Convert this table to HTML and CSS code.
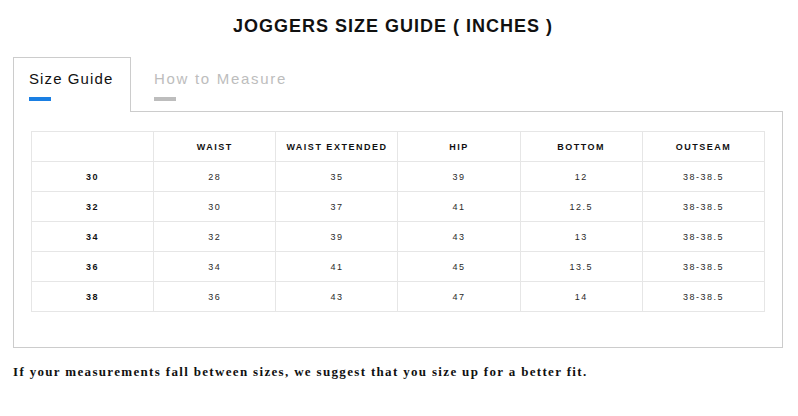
FILE: index.html
```html
<!DOCTYPE html>
<html>
<head>
<meta charset="utf-8">
<link rel="stylesheet" href="styles.css">
</head>
<body>
<div class="guide">
  <h1 class="title">JOGGERS SIZE GUIDE ( INCHES )</h1>
  <div class="tabs">
    <div class="tab tab-active">
      <span class="tab-label">Size Guide</span>
      <span class="tab-bar"></span>
    </div>
    <div class="tab tab-idle">
      <span class="tab-label">How to Measure</span>
      <span class="tab-bar"></span>
    </div>
  </div>
  <div class="panel">
    <table class="sizes">
      <thead>
        <tr><th></th><th>WAIST</th><th>WAIST EXTENDED</th><th>HIP</th><th>BOTTOM</th><th>OUTSEAM</th></tr>
      </thead>
      <tbody>
        <tr><td class="size">30</td><td>28</td><td>35</td><td>39</td><td>12</td><td>38-38.5</td></tr>
        <tr><td class="size">32</td><td>30</td><td>37</td><td>41</td><td>12.5</td><td>38-38.5</td></tr>
        <tr><td class="size">34</td><td>32</td><td>39</td><td>43</td><td>13</td><td>38-38.5</td></tr>
        <tr><td class="size">36</td><td>34</td><td>41</td><td>45</td><td>13.5</td><td>38-38.5</td></tr>
        <tr><td class="size">38</td><td>36</td><td>43</td><td>47</td><td>14</td><td>38-38.5</td></tr>
      </tbody>
    </table>
  </div>
  <p class="note">If your measurements fall between sizes, we suggest that you size up for a better fit.</p>
</div>
</body>
</html>
```

FILE: styles.css
```css
* { box-sizing: border-box; }
html, body { margin: 0; padding: 0; background: #fff; }
body { font-family: "Liberation Sans", Arial, sans-serif; color: #111; }

.guide {
  width: 770px;
  margin-left: 13px;
}

.title {
  margin: 15px 0 20px;
  font-size: 18px;
  line-height: 22px;
  font-weight: bold;
  letter-spacing: 1px;
  text-align: center;
  color: #111;
  padding-right: 10px;
}

.tabs {
  display: flex;
  gap: 7px;
  position: relative;
  z-index: 1;
  margin-bottom: -1px;
}

.tab {
  display: flex;
  flex-direction: column;
  align-items: flex-start;
  padding: 12px 15px 11px;
  border: 1px solid transparent;
  border-bottom: none;
  background: transparent;
}

.tab-active {
  border-color: #cccccc;
  background: #fff;
  width: 118px;
}

.tab-label {
  font-size: 15px;
  line-height: 18px;
  letter-spacing: 1.1px;
  color: #bdbdbd;
  white-space: nowrap;
}

.tab-idle .tab-label { letter-spacing: 1.7px; }

.tab-active .tab-label { color: #111; }

.tab-bar {
  display: block;
  width: 22px;
  height: 4px;
  margin-top: 9px;
  background: #bdbdbd;
}

.tab-active .tab-bar { background: #1a7fe3; }

.panel {
  border: 1px solid #cccccc;
  padding: 19px 17px 35px;
}

.sizes {
  width: 100%;
  border-collapse: collapse;
  table-layout: fixed;
}

.sizes th, .sizes td {
  border: 1px solid #e6e6e6;
  height: 30px;
  padding: 0;
  text-align: center;
  vertical-align: middle;
  font-size: 9px;
  letter-spacing: 1.5px;
}

.sizes th {
  font-weight: bold;
  color: #111;
}

.sizes td {
  color: #2a2a2a;
}

.sizes td.size {
  font-weight: bold;
  color: #111;
}

.note {
  margin: 16px 0 0;
  font-family: "Liberation Serif", "Times New Roman", serif;
  font-weight: bold;
  font-size: 13px;
  line-height: 16px;
  letter-spacing: 1.33px;
  color: #111;
}
```
